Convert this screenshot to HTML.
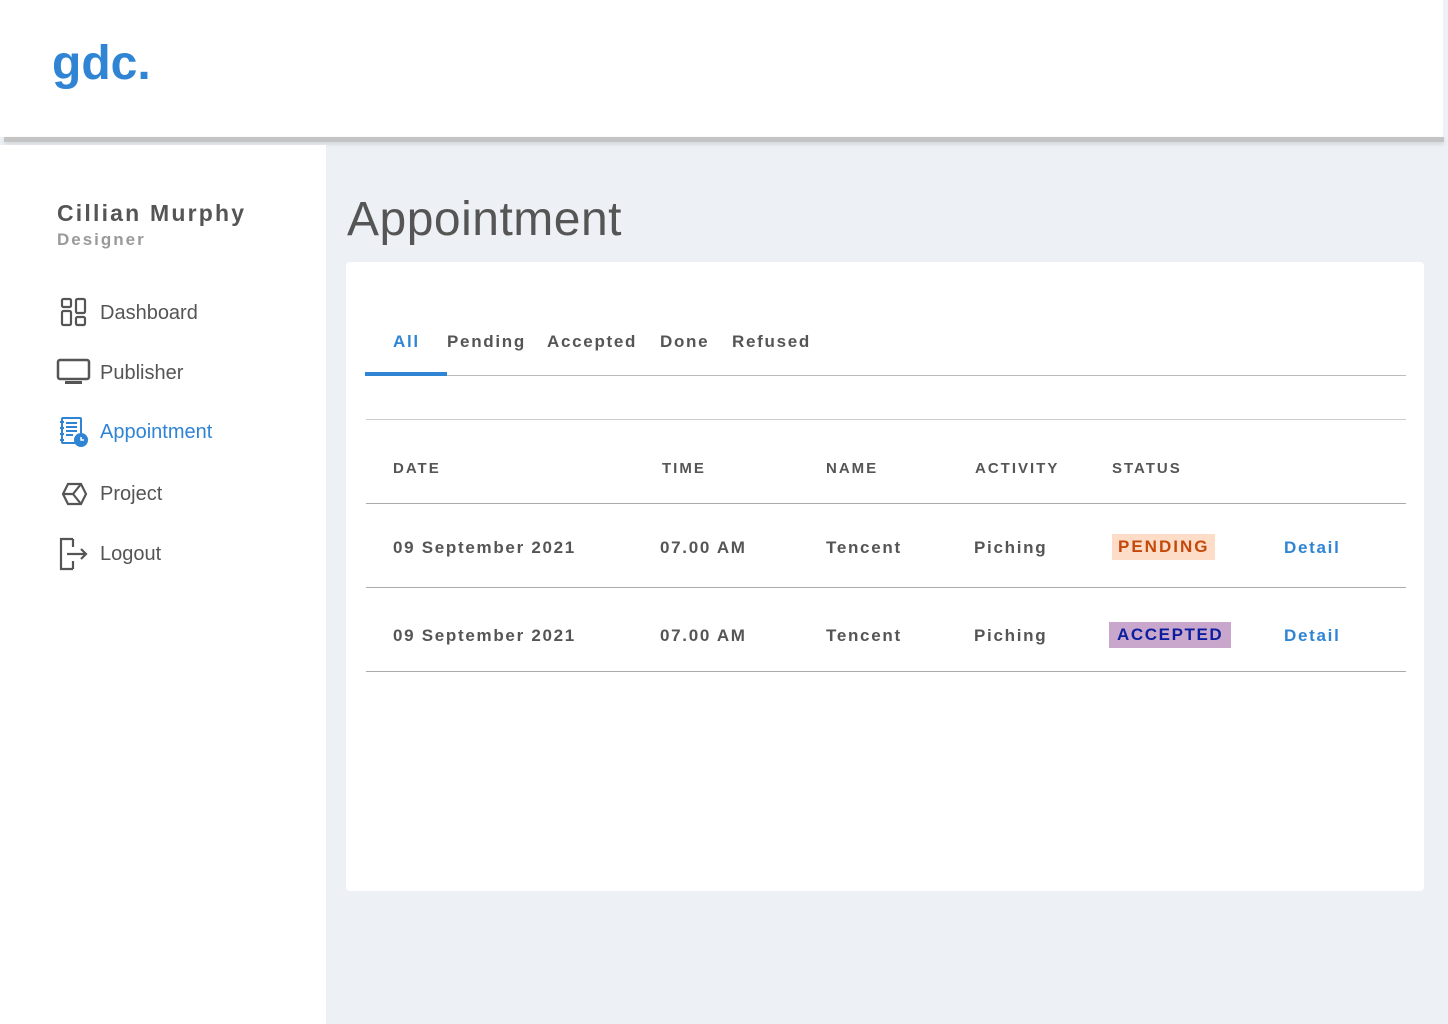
<!DOCTYPE html>
<html><head><meta charset="utf-8"><style>
*{margin:0;padding:0;box-sizing:border-box}
body{width:1448px;height:1024px;background:#edf1f5;font-family:"Liberation Sans",sans-serif;position:relative;overflow:hidden}
.hdr{position:absolute;left:0;top:0;width:1443px;height:137px;background:#fff}
.shadow{position:absolute;left:4px;top:137px;width:1440px;height:5px;background:#c4c4c4;box-shadow:0 2px 4px #cfd3d6}
.logo{position:absolute;left:52px;top:36px;font-size:48px;color:#2f84d4;font-weight:bold;-webkit-text-stroke:0px}
.side{position:absolute;left:0;top:145px;width:326px;height:879px;background:#fff}
.name{position:absolute;left:57px;top:200px;font-size:23px;font-weight:bold;color:#555;letter-spacing:2.2px}
.role{position:absolute;left:57px;top:230px;font-size:17px;font-weight:bold;color:#9a9a9a;letter-spacing:2px}
.nav{position:absolute;left:100px;font-size:20px;color:#555}
.nav.act{color:#2f84d4}
.ic{position:absolute}
h1{position:absolute;left:347px;top:192px;font-size:48px;font-weight:normal;color:#555;letter-spacing:0.5px}
.card{position:absolute;left:346px;top:262px;width:1078px;height:629px;background:#fff;border-radius:4px}
.t{position:absolute;font-size:17px;font-weight:bold;color:#555;letter-spacing:1.7px}
.th{position:absolute;font-size:15px;font-weight:bold;color:#555;letter-spacing:2px}
.line{position:absolute;left:366px;width:1040px;height:1px;background:#aaa}
.b{position:absolute;font-size:17px;font-weight:bold;letter-spacing:2px;padding:3px 6px}
</style></head><body>
<div class="hdr"></div><div class="shadow"></div>
<div class="logo">gdc.</div>
<div class="side"></div>
<div class="name">Cillian Murphy</div>
<div class="role">Designer</div>

<svg class="ic" style="left:60px;top:297px" width="27" height="30" viewBox="0 0 27 30" fill="none" stroke="#555" stroke-width="2.2"><rect x="2" y="2" width="9" height="8" rx="1.5"/><rect x="2" y="14" width="9" height="14" rx="1.5"/><rect x="16" y="2" width="9" height="14" rx="1.5"/><rect x="16" y="20" width="9" height="8" rx="1.5"/></svg>
<div class="nav" style="top:302px">Dashboard</div>
<svg class="ic" style="left:56px;top:358px" width="35" height="28" viewBox="0 0 35 28" fill="none" stroke="#555" stroke-width="2.5"><rect x="2" y="2" width="31" height="19" rx="2"/><rect x="9" y="23" width="17" height="3" fill="#555" stroke="none"/></svg>
<div class="nav" style="top:362px">Publisher</div>
<svg class="ic" style="left:59px;top:416px" width="29" height="31" viewBox="0 0 29 31" fill="none" stroke="#2f84d4" stroke-width="2"><rect x="3" y="2" width="19" height="25" rx="1"/><path d="M7 7h11M7 11h11M7 15h11M7 19h7M1 6h4M1 12h4M1 18h4M1 24h4"/><circle cx="22" cy="24" r="6" fill="#2f84d4"/><path d="M22 21v3h3" stroke="#fff" stroke-width="1.5"/></svg>
<div class="nav act" style="top:421px">Appointment</div>
<svg class="ic" style="left:61px;top:482px" width="27" height="24" viewBox="0 0 27 24" fill="none" stroke="#555" stroke-width="2.2"><path d="M7 2h13l5 10-5 10H7L2 12z"/><path d="M2 12h10l8-10M12 12l8 10"/></svg>
<div class="nav" style="top:483px">Project</div>
<svg class="ic" style="left:59px;top:537px" width="30" height="34" viewBox="0 0 30 34" fill="none" stroke="#555" stroke-width="2.2"><path d="M14 2H2v30h12M14 2v8M14 32v-8"/><path d="M8 17h19M22 12l5 5-5 5"/></svg>
<div class="nav" style="top:543px">Logout</div>

<h1>Appointment</h1>
<div class="card"></div>
<div class="t" style="left:393px;top:332px;color:#2f84d4">All</div>
<div class="t" style="left:447px;top:332px">Pending</div>
<div class="t" style="left:547px;top:332px">Accepted</div>
<div class="t" style="left:660px;top:332px">Done</div>
<div class="t" style="left:732px;top:332px">Refused</div>
<div class="line" style="top:375px;background:#bbb"></div>
<div style="position:absolute;left:365px;top:372px;width:82px;height:4px;background:#2f84d4"></div>
<div class="line" style="top:419px;background:#ccc"></div>
<div class="th" style="left:393px;top:460px">DATE</div>
<div class="th" style="left:662px;top:460px">TIME</div>
<div class="th" style="left:826px;top:460px">NAME</div>
<div class="th" style="left:975px;top:460px">ACTIVITY</div>
<div class="th" style="left:1112px;top:460px">STATUS</div>
<div class="line" style="top:503px"></div>
<div class="t" style="left:393px;top:538px">09 September 2021</div>
<div class="t" style="left:660px;top:538px">07.00 AM</div>
<div class="t" style="left:826px;top:538px">Tencent</div>
<div class="t" style="left:974px;top:538px">Piching</div>
<div class="b" style="left:1112px;top:534px;background:#fddcc8;color:#c4490a">PENDING</div>
<div class="t" style="left:1284px;top:538px;color:#2f84d4">Detail</div>
<div class="line" style="top:587px"></div>
<div class="t" style="left:393px;top:626px">09 September 2021</div>
<div class="t" style="left:660px;top:626px">07.00 AM</div>
<div class="t" style="left:826px;top:626px">Tencent</div>
<div class="t" style="left:974px;top:626px">Piching</div>
<div class="b" style="left:1109px;top:622px;background:#c9a7cc;color:#0b1f9e;padding:3px 8px;letter-spacing:1.6px">ACCEPTED</div>
<div class="t" style="left:1284px;top:626px;color:#2f84d4">Detail</div>
<div class="line" style="top:671px"></div>
</body></html>
